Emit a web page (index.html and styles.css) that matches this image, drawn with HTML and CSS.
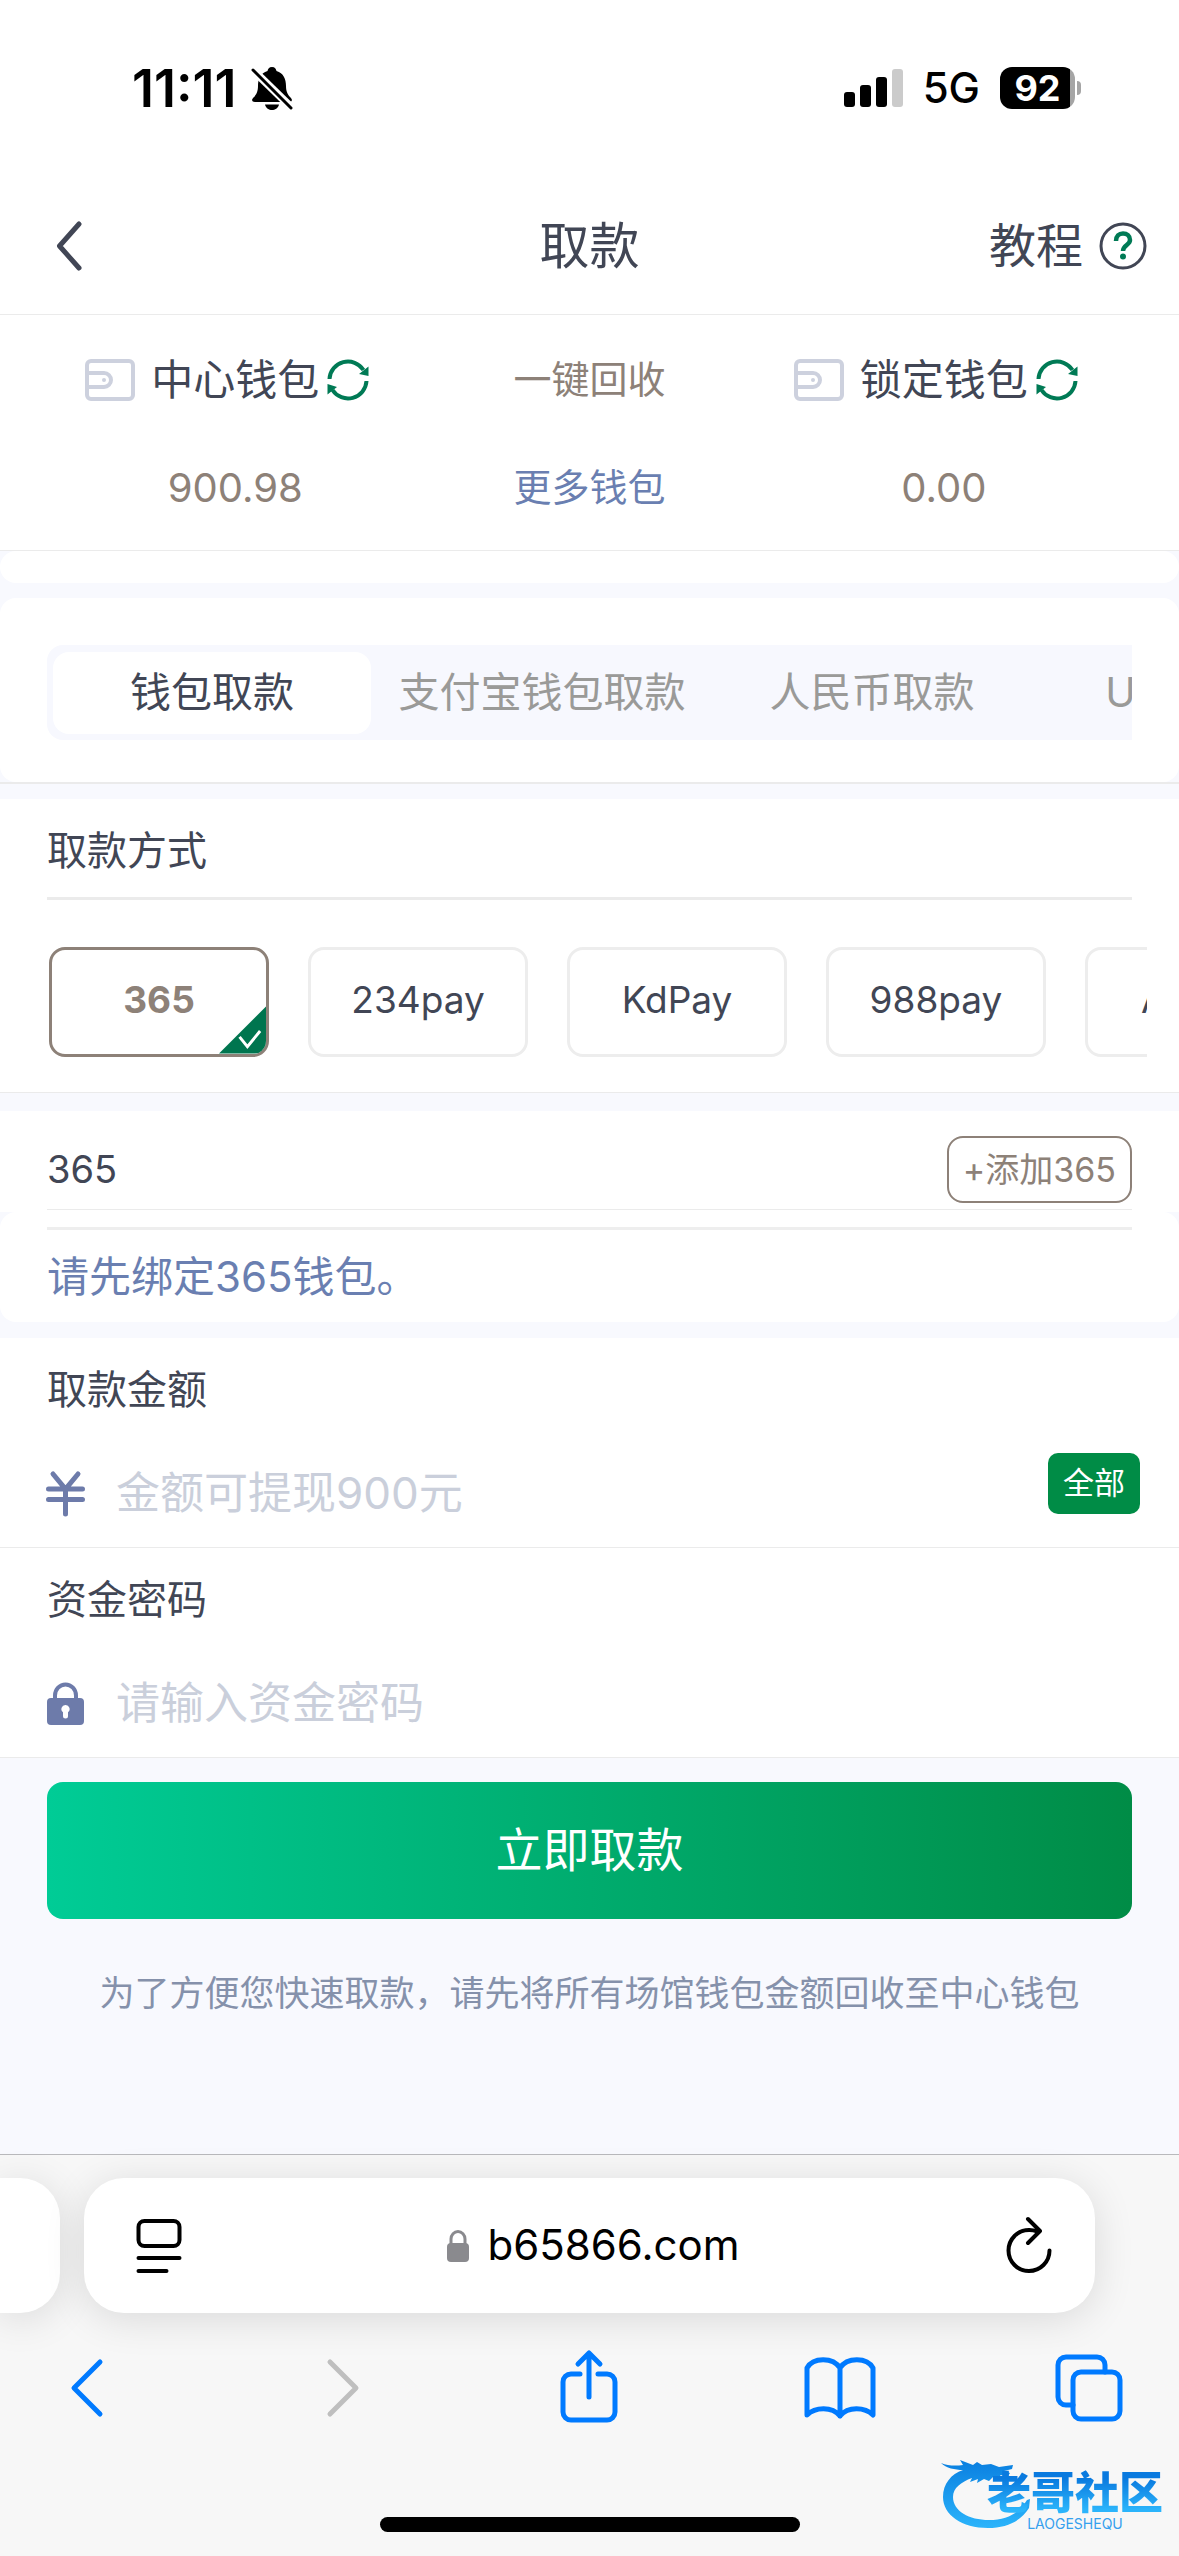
FILE: index.html
```html
<!DOCTYPE html>
<html lang="zh-CN">
<head>
<meta charset="utf-8">
<meta name="viewport" content="width=device-width, initial-scale=1">
<title>取款</title>
<link rel="stylesheet" href="styles.css">
</head>
<body>
<svg class="defs" aria-hidden="true">
  <symbol id="wallet" viewBox="0 0 50 42">
    <rect x="2" y="2" width="46" height="38" rx="4" fill="none" stroke="currentColor" stroke-width="4"/>
    <path d="M2 14h17a7 7 0 0 1 0 14H2" fill="none" stroke="currentColor" stroke-width="4"/>
    <circle cx="19" cy="21" r="2" fill="currentColor"/>
  </symbol>
  <symbol id="refresh" viewBox="0 0 42 42">
    <path d="M2.500 20a18.500 18.500 0 0 1 34-9M39.500 22a18.500 18.500 0 0 1-34 9" fill="none" stroke="currentColor" stroke-width="4"/>
    <path d="M41.500 7.500v9.500l-9.500-2zM.500 35.500V25l9.500 3z" fill="currentColor"/>
  </symbol>
</svg>

<div class="statusbar">
  <div class="status-group">
    <span class="time">11:11</span>
    <svg class="bell" viewBox="0 0 42 43" aria-label="静音">
      <path d="M21 0c3 0 4 2 4.500 4 7 2 9.500 8 9.500 15 0 6 2 9 4.500 11.500C42 33 41 35 38 35H4c-3 0-4-2-1.500-4.500C5 28 7 25 7 19c0-7 2.500-13 9.500-15C17 2 18 0 21 0zM14 37.500h14c-1 4-4 5.500-7 5.500s-6-1.500-7-5.500z"/>
      <path d="M1 2l40 39" stroke="#fff" stroke-width="8"/>
      <path d="M2 3l38 38" stroke="#000" stroke-width="3" stroke-linecap="round"/>
    </svg>
  </div>
  <div class="status-group">
    <svg class="signal" viewBox="0 0 59 38" aria-label="信号">
      <rect y="23" width="11" height="15" rx="3"/><rect x="16" y="16" width="11" height="22" rx="3"/>
      <rect x="32" y="8" width="11" height="30" rx="3"/><rect x="48" width="11" height="38" rx="3" fill="#cbcbcb"/>
    </svg>
    <span class="network">5G</span>
    <span class="battery">92</span>
  </div>
</div>

<header class="header">
  <button class="back" aria-label="返回"><svg viewBox="0 0 26 48"><path d="M23 2L3.500 24 23 46" fill="none" stroke="currentColor" stroke-width="5" stroke-linecap="round" stroke-linejoin="round"/></svg></button>
  <h1 class="title">取款</h1>
  <a class="guide" href="#guide">教程
    <svg viewBox="0 0 48 48" aria-hidden="true"><circle cx="24" cy="24" r="22" fill="none" stroke="currentColor" stroke-width="3"/><path d="M17 19c0-5 3-7.500 7-7.500s7 2.500 7 6.500c0 5-7 5-7 11" fill="none" stroke="#007a55" stroke-width="4.500"/><circle cx="24" cy="34.500" r="3" fill="#007a55"/></svg>
  </a>
</header>

<main class="page">
  <section class="wallets">
    <div class="wallet-name"><svg class="wallet-icon"><use href="#wallet"/></svg><span>中心钱包</span><button class="refresh" aria-label="刷新中心钱包"><svg><use href="#refresh"/></svg></button></div>
    <button class="collect">一键回收</button>
    <div class="wallet-name"><svg class="wallet-icon"><use href="#wallet"/></svg><span>锁定钱包</span><button class="refresh" aria-label="刷新锁定钱包"><svg><use href="#refresh"/></svg></button></div>
    <span class="balance">900.98</span>
    <a class="more" href="#wallets">更多钱包</a>
    <span class="balance">0.00</span>
  </section>

  <div class="strip"></div>

  <div class="tab-section">
    <nav class="tab-panel">
      <div class="tabs">
        <button class="tab active">钱包取款</button>
        <button class="tab">支付宝钱包取款</button>
        <button class="tab">人民币取款</button>
        <button class="tab">USDT取款</button>
      </div>
    </nav>
  </div>

  <section class="methods">
    <h2 class="section-title">取款方式</h2>
    <div class="method-list">
      <button class="method selected">365
        <svg class="tick" viewBox="0 0 48 48" aria-hidden="true"><path d="M48 0v48H0z" fill="#00754f"/><path d="M21 31l8 10 13-16" fill="none" stroke="#fff" stroke-width="3"/></svg>
      </button>
      <button class="method">234pay</button>
      <button class="method">KdPay</button>
      <button class="method">988pay</button>
      <button class="method">AliPay</button>
    </div>
  </section>

  <section class="account">
    <div class="account-row"><h2>365</h2><button class="add">+添加365</button></div>
  </section>
  <div class="notice"><p>请先绑定365钱包。</p></div>

  <form class="form">
    <div class="field">
      <label for="amount">取款金额</label>
      <div class="field-row">
        <svg class="field-icon" viewBox="0 0 37 44" aria-hidden="true"><path d="M6 2l12.500 15L31 2M1.500 17h34M1.500 27.500h34M18.500 17v25" fill="none" stroke="currentColor" stroke-width="5" stroke-linecap="round"/></svg>
        <input id="amount" type="text" placeholder="金额可提现900元">
        <button class="all" type="button">全部</button>
      </div>
    </div>
    <div class="field">
      <label for="password">资金密码</label>
      <div class="field-row">
        <svg class="field-icon" viewBox="0 0 37 44" aria-hidden="true"><path d="M8 18v-4.500a10.500 11 0 0 1 21 0V18" fill="none" stroke="currentColor" stroke-width="4"/><rect y="16" width="37" height="27" rx="4" fill="currentColor"/><path d="M18.500 23a4 4 0 0 1 2.500 7.200V34a2.500 2.500 0 0 1-5 0v-3.800A4 4 0 0 1 18.500 23z" fill="#fff"/></svg>
        <input id="password" type="password" placeholder="请输入资金密码">
      </div>
    </div>
    <button class="submit" type="button">立即取款</button>
    <p class="hint">为了方便您快速取款，请先将所有场馆钱包金额回收至中心钱包</p>
  </form>
</main>

<footer class="browser">
  <div class="address-row">
    <div class="prev-card"></div>
    <div class="address">
      <button class="chrome-btn" aria-label="页面设置"><svg viewBox="0 0 46 54"><g fill="none" stroke="#000" stroke-width="4" stroke-linecap="round"><rect x="2.500" y="2" width="41" height="25" rx="6"/><path d="M2.500 39h41M2.500 52h28"/></g></svg></button>
      <span class="url"><svg viewBox="0 0 22 32" aria-hidden="true"><path d="M4 15V9a7 7.500 0 0 1 14 0v6" fill="none" stroke="#8a8a8e" stroke-width="3"/><rect y="13" width="22" height="19" rx="4" fill="#8a8a8e"/></svg>b65866.com</span>
      <button class="chrome-btn" aria-label="重新载入"><svg viewBox="0 0 46 54"><path d="M32 12.500a20.500 20.500 0 0 0-8-1.500 20.500 20.500 0 1 0 20.500 20.500M23 0l12 12-12 12" fill="none" stroke="#000" stroke-width="4" stroke-linecap="round" stroke-linejoin="round"/></svg></button>
    </div>
  </div>
  <nav class="toolbar">
    <button aria-label="后退"><svg viewBox="0 0 76 76"><path d="M50 13L24 39l26 26"/></svg></button>
    <button class="disabled" aria-label="前进"><svg viewBox="0 0 76 76"><path d="M29 13l26 26-26 26"/></svg></button>
    <button aria-label="分享"><svg viewBox="0 0 76 76"><path d="M28 25H19a8 8 0 0 0-8 8v30a8 8 0 0 0 8 8h36a8 8 0 0 0 8-8V33a8 8 0 0 0-8-8H46M37 48V5M26 15L37 4l11 11"/></svg></button>
    <button aria-label="书签"><svg viewBox="0 0 76 76"><path d="M38 19c-7-11-27-11-33 0v47c8-8 25-9 33 1 8-10 25-9 33-1V19c-6-11-26-11-33 0zM38 19v48"/></svg></button>
    <button aria-label="标签页"><svg viewBox="0 0 76 76"><rect x="20" y="23" width="47" height="47" rx="8"/><path d="M20 56h-7a8 8 0 0 1-8-8V16a8 8 0 0 1 8-8h31a8 8 0 0 1 8 8v7"/></svg></button>
  </nav>
  <div class="home-indicator"></div>
  <div class="watermark">
    <svg viewBox="0 0 92 76" aria-hidden="true">
      <defs><linearGradient id="dragon" x1="0" y1="0" x2="0" y2="1"><stop offset="0" stop-color="#0a7fe0"/><stop offset="1" stop-color="#2bb4fb"/></linearGradient></defs>
      <path fill="url(#dragon)" d="M0 7c7 3 15 3 22 2l-3-5 13 5 4-3 5 3 9-1 8 3 14-2-1 4-8 2 6 2-2 3-8-1 2 3-9-1-4 4-5-2-7 4 1-4-8 3 2-4C20 26 12 32 12 41c0 14 16 23 36 23 18 0 30-7 38-20l3-1-1 9C80 65 66 72 47 72 21 72 2 59 2 41 2 28 10 18 22 14 14 14 5 12 0 7z"/>
    </svg>
    <div class="watermark-text">
      <span class="brand">老哥社区</span>
      <span class="brand-latin">LAOGESHEQU</span>
    </div>
  </div>
</footer>
</body>
</html>
```
FILE: styles.css
```css
* { box-sizing: border-box; }

body {
  margin: 0;
  min-height: 100vh;
  display: flex;
  flex-direction: column;
  background: #f8f9fe;
  color: #414655;
  font-family: Inter, "Noto Sans CJK SC", sans-serif;
  font-size: 40px;
  line-height: 1.25;
}

h1, h2, p { margin: 0; font-weight: 400; }
svg { display: block; overflow: visible; }
a { color: inherit; text-decoration: none; }
button {
  margin: 0;
  padding: 0;
  border: 0;
  background: none;
  color: inherit;
  font: inherit;
}
.defs { position: absolute; width: 0; height: 0; }

/* Status bar */
.statusbar {
  height: 176px;
  padding: 0 104px 0 132px;
  display: flex;
  align-items: center;
  justify-content: space-between;
  background: #fff;
  color: #000;
}
.status-group { display: flex; align-items: center; gap: 20px; }
.time { font-size: 52px; font-weight: 600; }
.bell { width: 42px; height: 43px; margin-left: -6px; }
.signal { width: 59px; height: 38px; }
.network { font-size: 42px; font-weight: 500; }
.battery {
  position: relative;
  width: 75px;
  height: 42px;
  border-radius: 12px;
  background: linear-gradient(90deg, #000 70px, #a5a5a5 70px);
  color: #fff;
  font-size: 36px;
  font-weight: 700;
  line-height: 42px;
  text-align: center;
}
.battery::after {
  content: "";
  position: absolute;
  top: 14px;
  right: -6px;
  width: 4px;
  height: 14px;
  border-radius: 0 4px 4px 0;
  background: #a5a5a5;
}

/* Page header */
.header {
  height: 139px;
  padding: 2px 32px 0 56px;
  display: grid;
  grid-template-columns: 1fr auto 1fr;
  align-items: center;
  background: #fff;
  border-bottom: 1px solid #ebebeb;
}
.back { justify-self: start; }
.back svg { width: 26px; height: 48px; }
.title { font-size: 50px; padding-right: 24px; }
.guide { justify-self: end; display: flex; align-items: center; gap: 16px; font-size: 47px; }
.guide svg { width: 48px; height: 48px; }

.page { flex: 1; }

/* Wallet balances */
.wallets {
  padding: 11px 58px 8px;
  display: grid;
  grid-template-columns: repeat(3, 1fr);
  grid-auto-rows: 108px;
  align-items: center;
  justify-items: center;
  background: #fff;
  border-bottom: 1px solid #ebebeb;
}
.wallet-name { display: flex; align-items: center; padding-right: 16px; font-size: 42px; }
.wallet-icon { width: 50px; height: 42px; margin-right: 16px; color: #cdd1de; }
.refresh { margin-left: 8px; color: #007a55; }
.refresh svg { width: 42px; height: 42px; }
.collect, .more { font-size: 38px; }
.collect, .balance { color: #8d8178; }
.more { color: #6a7fb1; }

.strip { height: 32px; margin-bottom: 15px; border-radius: 16px; background: #fff; }

/* Withdrawal type tabs */
.tab-section { margin-bottom: 15px; border-bottom: 2px solid #ebebeb; }
.tab-panel { padding: 47px 47px 42px; border-radius: 16px; background: #fff; }
.tabs {
  height: 95px;
  padding: 7px 0 6px;
  display: flex;
  overflow: hidden;
  border-radius: 16px 0 0 16px;
  background: #f7f8fe;
}
.tab {
  flex: 0 0 318px;
  margin: 0 6px;
  border-radius: 16px;
  color: #9a9a98;
  font-size: 41px;
}
.tab.active { background: #fff; color: #414655; }

/* Payment methods */
.methods { padding-left: 47px; background: #fff; border-bottom: 1px solid #ebebeb; }
.section-title {
  margin-right: 47px;
  padding-top: 6px;
  font-size: 40px;
  line-height: 92px;
  border-bottom: 3px solid #ebebeb;
}
.method-list {
  margin-right: 32px;
  padding: 47px 0 35px 2px;
  display: flex;
  gap: 39px;
  overflow: hidden;
}
.method {
  position: relative;
  flex: 0 0 220px;
  height: 110px;
  padding-bottom: 4px;
  overflow: hidden;
  border: 3px solid #ededed;
  border-radius: 16px;
  font-size: 37px;
}
.method.selected { border-color: #8d8178; color: #8d8178; font-weight: 700; }
.tick { position: absolute; right: 0; bottom: 0; width: 47px; height: 48px; }

/* Bound account */
.account { margin-top: 18px; padding: 0 47px 2px; background: #fff; }
.account-row {
  height: 99px;
  padding-top: 18px;
  display: flex;
  align-items: center;
  justify-content: space-between;
  border-bottom: 1px solid #ebebeb;
}
.account-row h2 { padding-top: 2px; font-size: 38px; }
.add {
  height: 67px;
  padding: 2px 14px 0;
  border: 2px solid #8d8178;
  border-radius: 16px;
  color: #8d8178;
  font-size: 34px;
}
.notice { margin-bottom: 16px; padding: 15px 47px 0; border-radius: 16px; background: #fff; }
.notice p {
  padding-top: 2px;
  border-top: 3px solid #eee;
  color: #6a7fb1;
  font-size: 42px;
  line-height: 90px;
}

/* Amount and password */
.field { padding-left: 47px; background: #fff; border-bottom: 1px solid #ebebeb; }
.field label { display: block; padding-top: 4px; line-height: 96px; }
.field-row { height: 109px; padding: 2px 39px 0 0; display: flex; align-items: center; }
.field-icon { width: 37px; height: 44px; margin-right: 32px; color: #6d7baa; }
.field input {
  flex: 1;
  min-width: 0;
  padding: 0;
  border: 0;
  outline: 0;
  background: none;
  color: #414655;
  font: inherit;
  font-size: 44px;
}
.field input::placeholder { color: #cacfdb; opacity: 1; }
.all {
  width: 92px;
  height: 61px;
  margin-bottom: 20px;
  border-radius: 10px;
  background: #008c46;
  color: #fff;
  font-size: 31px;
}
.submit {
  display: block;
  width: calc(100% - 94px);
  height: 137px;
  margin: 24px 47px 49px;
  border-radius: 16px;
  background: linear-gradient(90deg, #00cc96, #008c46);
  color: #fff;
  font-size: 47px;
}
.hint { color: #8591ab; font-size: 35px; line-height: 50px; text-align: center; }

/* Browser bar */
.browser {
  position: relative;
  padding: 23px 0 24px;
  border-top: 1px solid #b9b9bc;
  background: #f7f7f7;
}
.address-row { display: flex; gap: 24px; padding-right: 84px; overflow-x: clip; }
.prev-card, .address { height: 135px; background: #fff; box-shadow: 0 6px 40px rgba(0, 0, 0, 0.12); }
.prev-card { width: 60px; border-radius: 0 40px 40px 0; }
.address {
  flex: 1;
  padding: 0 44px 0 52px;
  display: flex;
  align-items: center;
  justify-content: space-between;
  border-radius: 40px;
}
.chrome-btn svg { width: 46px; height: 54px; }
.url { display: flex; align-items: center; gap: 18px; color: #000; font-size: 42px; }
.url svg { width: 22px; height: 32px; }
.toolbar { margin-top: 36px; padding: 0 50px; display: flex; justify-content: space-between; }
.toolbar svg {
  width: 76px;
  height: 76px;
  fill: none;
  stroke: #007aff;
  stroke-width: 5;
  stroke-linecap: round;
  stroke-linejoin: round;
}
.toolbar .disabled svg { stroke: #bfbfbf; }
.home-indicator {
  width: 420px;
  height: 15px;
  margin: 92px auto 0;
  border-radius: 8px;
  background: #000;
}

/* Community mark over the corner of the bar */
.watermark { position: absolute; right: 16px; bottom: 24px; display: flex; align-items: flex-end; }
.watermark svg { width: 92px; height: 76px; }
.watermark-text {
  margin-left: -46px;
  padding-bottom: 1px;
  display: flex;
  flex-direction: column;
  align-items: center;
}
.brand {
  background: linear-gradient(#0a7adf 20%, #2bb4fb 85%);
  background-clip: text;
  color: transparent;
  font-size: 44px;
  font-weight: 900;
  line-height: 48px;
}
.brand-latin { color: #35a0ee; font-size: 14px; line-height: 14px; }
```
